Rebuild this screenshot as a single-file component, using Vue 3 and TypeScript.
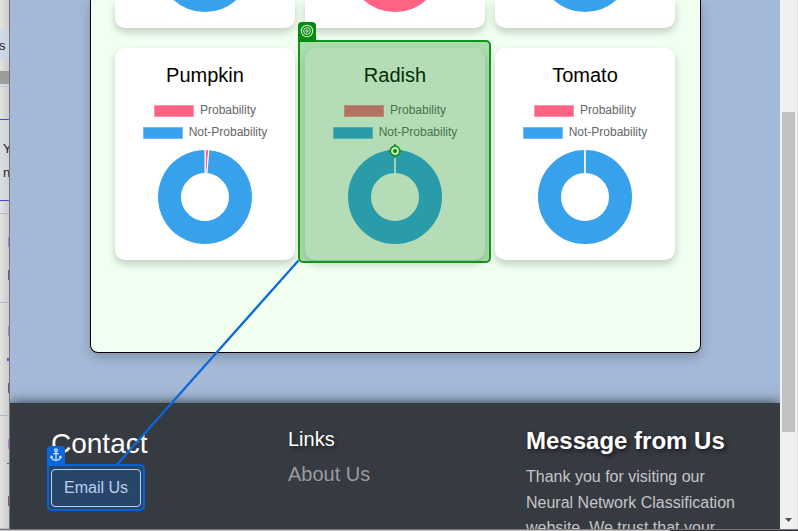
<script setup lang="ts">
interface Vegetable {
  name: string
  share: number
}

const previous = [
  { id: 'a', color: '#38a1eb' },
  { id: 'b', color: '#ff6384' },
  { id: 'c', color: '#38a1eb' },
]

const vegetables: Vegetable[] = [
  { name: 'Pumpkin', share: 0.013 },
  { name: 'Radish', share: 0 },
  { name: 'Tomato', share: 0 },
]

// Ring segment between two fractions of a full turn, clockwise from the top.
function segment(from: number, to: number): string {
  const point = (r: number, f: number) => {
    const a = f * Math.PI * 2
    return `${(48 + r * Math.sin(a)).toFixed(2)} ${(48 - r * Math.cos(a)).toFixed(2)}`
  }
  const large = to - from > 0.5 ? 1 : 0
  return `M${point(47.5, from)}A47.5 47.5 0 ${large} 1 ${point(47.5, to)}L${point(23.5, to)}A23.5 23.5 0 ${large} 0 ${point(23.5, from)}Z`
}
</script>

<template>
  <div class="screen">
    <aside class="behind">
      <div class="b-head"></div>
      <div class="b-tab">s</div>
      <div class="b-gap"></div>
      <div class="b-bar"></div>
      <div class="b-space"></div>
      <div class="b-box"><span>Y</span><span>n</span></div>
      <div class="b-rest"></div>
      <div class="b-row first"><i></i><i class="dark"></i></div>
      <div class="b-row second"><i></i><i class="blue"></i><i class="dark"></i></div>
      <div class="b-row third"><i></i><i class="line"></i><i class="dark"></i></div>
    </aside>

    <main class="page">
      <section class="panel">
        <div class="row">
          <article v-for="p in previous" :key="p.id" class="card cut">
            <svg class="donut" width="96" height="96" viewBox="0 0 96 96">
              <circle cx="48" cy="48" r="35.5" fill="none" :stroke="p.color" stroke-width="23" />
            </svg>
          </article>
        </div>
        <div class="row">
          <article v-for="v in vegetables" :key="v.name" class="card">
            <h5>{{ v.name }}</h5>
            <div class="legend">
              <div class="key"><span class="swatch pink"></span>Probability</div>
              <div class="key"><span class="swatch blue"></span>Not-Probability</div>
            </div>
            <svg class="donut" width="96" height="96" viewBox="0 0 96 96">
              <template v-if="v.share > 0">
                <path :d="segment(0, v.share)" fill="#ff6384" stroke="#fff" stroke-width="1.2" />
                <path :d="segment(v.share, 1)" fill="#38a1eb" stroke="#fff" stroke-width="1" />
              </template>
              <template v-else>
                <circle cx="48" cy="48" r="35.5" fill="none" stroke="#38a1eb" stroke-width="23" />
                <path d="M48 0V25" stroke="#fff" stroke-width="1.700" />
              </template>
            </svg>
          </article>
        </div>
      </section>

      <footer class="footer">
        <div class="col contact">
          <h3>Contact</h3>
          <button type="button">Email Us</button>
        </div>
        <div class="col links">
          <h5>Links</h5>
          <a>About Us</a>
        </div>
        <div class="col message">
          <h4>Message from Us</h4>
          <p>Thank you for visiting our Neural Network Classification website. We trust that your</p>
        </div>
      </footer>
    </main>

    <div class="scrollbar">
      <div class="thumb"></div>
      <svg class="down" width="7" height="4" viewBox="0 0 7 4"><path d="M0 0h7L3.5 4z" fill="#505050" /></svg>
    </div>

    <div class="bottom-edge"><span></span></div>

    <svg class="connector" width="798" height="531" viewBox="0 0 798 531">
      <path d="M298.500 260.500L117 464.500" stroke="#0969da" stroke-width="2.200" fill="none" />
    </svg>

    <div class="mark target">
      <span class="badge">
        <svg width="14" height="14" viewBox="0 0 14 14" fill="none" stroke="#d5f2d5">
          <circle cx="7" cy="7" r="5.700" stroke-width="1.100" />
          <circle cx="7" cy="7" r="3.400" stroke-width="1" />
          <circle cx="7" cy="7" r="1.200" stroke-width="1" />
        </svg>
      </span>
    </div>
    <svg class="point" width="14" height="14" viewBox="0 0 14 14">
      <path d="M7 0v14M0 7h14" stroke="#12941b" stroke-width="1.600" />
      <circle cx="7" cy="7" r="4.800" fill="#c5ebc8" stroke="#12941b" stroke-width="1.700" />
      <circle cx="7" cy="7" r="2" fill="#078a10" />
    </svg>

    <div class="mark anchor">
      <span class="badge">
        <svg width="12" height="14" viewBox="0 0 12 14" fill="none" stroke="#d8e9ff" stroke-width="1.200">
          <circle cx="6" cy="2.300" r="1.400" />
          <path d="M6 3.700V12.500M3.300 5.700H8.700M1.300 8.500C1.500 11 3.500 12.300 6 12.500C8.500 12.300 10.500 11 10.700 8.500M.5 10L1.300 8.200L3 9.500M11.500 10L10.700 8.200L9 9.500" />
        </svg>
      </span>
    </div>
  </div>
</template>

<style>
body {
  margin: 0;
  overflow: hidden;
}
</style>

<style scoped>
* {
  box-sizing: border-box;
}
.screen {
  position: relative;
  width: 798px;
  height: 531px;
  overflow: hidden;
  display: grid;
  grid-template: 529px 2px / 10px 770px 18px;
  font-family: "Liberation Sans", Arial, sans-serif;
  background: #dcdcdc;
}
h3, h4, h5, p {
  margin: 0;
  font-weight: 400;
}

/* window behind */
.behind {
  overflow: hidden;
  border-right: 1px solid #777;
  background: linear-gradient(90deg, #e3e3e3, #cbcbcb);
  display: flex;
  flex-direction: column;
  color: #222;
  font-size: 13px;
}
.behind > div { flex: none; }
.b-head { height: 29px; }
.b-tab {
  height: 32px;
  line-height: 33px;
  margin-left: -1px;
  background: rgba(200, 211, 235, .6);
}
.b-gap { height: 10px; }
.b-bar { height: 13px; background: #9c9c9c; }
.b-space { height: 35px; margin-top: 2px; border-top: 1px solid #b9c4df; }
.b-box {
  height: 82px;
  margin-top: -2px;
  border-top: 1px solid #4a43cc;
  border-bottom: 1px solid #4a43cc;
  background: rgba(210, 215, 225, .5);
  display: flex;
  flex-direction: column;
  padding: 17px 0 0 3px;
  line-height: 24px;
}
.b-rest { height: 13px; border-bottom: 1px solid #b0b9cb; }
.b-row {
  display: flex;
  flex-direction: column;
  align-items: flex-end;
  border-bottom: 1px solid #b0b9cb;
}
.b-row i { width: 1px; height: 10px; background: #b77bc9; }
.b-row .dark { background: #884b76; }
.b-row .blue { width: 2px; height: 3px; background: #6a55cf; }
.b-row .line { width: 2px; height: 1px; margin-bottom: 18px; background: #555; }
.first { height: 89px; padding-top: 23px; gap: 23px; }
.second { height: 113px; padding-top: 23px; gap: 22px; }
.third { height: 113px; padding-top: 23px; gap: 14px; }

/* page */
.page {
  overflow: hidden;
  background: #a3b9d7;
  display: flex;
  flex-direction: column;
}
.panel {
  width: 611px;
  height: 353px;
  flex: none;
  margin-left: 80px;
  padding: 0 24px;
  border: 1px solid #000;
  border-top: 0;
  border-radius: 0 0 8px 8px;
  background: #f0fff0;
  box-shadow: 0 4px 12px rgba(0, 0, 0, .22);
  display: flex;
  flex-direction: column;
  gap: 20px;
}
.row {
  display: flex;
  gap: 10px;
}
.card {
  width: 180px;
  height: 212px;
  border-radius: 10px;
  background: #fff;
  box-shadow: 0 4px 8px rgba(0, 0, 0, .2);
  display: flex;
  flex-direction: column;
  align-items: center;
  padding-top: 15px;
}
.card.cut {
  height: 28px;
  padding: 0 0 15px;
  border-radius: 0 0 10px 10px;
  justify-content: flex-end;
}
.card h5 {
  font-size: 20px;
  line-height: 24px;
  color: #000;
}
.legend {
  margin-top: 13px;
  font-size: 12px;
  line-height: 20px;
  color: #666;
}
.key {
  height: 22px;
  display: flex;
  justify-content: center;
  align-items: flex-start;
  gap: 6px;
}
.swatch {
  width: 40px;
  height: 12px;
  margin-top: 5px;
  border: 1px solid #ff91a9;
  background: #ff6384;
}
.swatch.blue {
  border-color: #72bdf1;
  background: #38a1eb;
}
.donut {
  display: block;
  flex: none;
  margin-top: 5px;
}
.cut .donut { margin: 0; }

.footer {
  height: 126px;
  flex: none;
  margin-top: 50px;
  background: #363a41;
  box-shadow: 0 0 12px rgba(0, 0, 0, .75);
  display: grid;
  grid-template-columns: 237px 238px 1fr;
  padding: 0 30px 0 41px;
  color: #fff;
}
.contact h3 {
  font-size: 28px;
  line-height: 34px;
  padding-top: 24px;
}
.contact button {
  display: block;
  width: 90px;
  height: 38px;
  margin-top: 8px;
  padding: 0;
  border: 1px solid #f8f9fa;
  border-radius: 4px;
  background: none;
  color: #f8f9fa;
  font: 16px/24px "Liberation Sans", Arial, sans-serif;
}
.links h5 {
  padding-top: 24px;
  font-size: 20px;
  line-height: 24px;
  text-shadow: 2px 2px 4px rgba(0, 0, 0, .5);
}
.links a {
  display: block;
  margin-top: 8px;
  font-size: 20px;
  line-height: 30px;
  color: #999ca0;
}
.message h4 {
  padding-top: 23px;
  font-size: 24px;
  font-weight: 700;
  line-height: 29px;
  text-shadow: 2px 2px 4px rgba(0, 0, 0, .6);
}
.message p {
  width: 225px;
  margin-top: 9px;
  font-size: 16px;
  line-height: 25.600px;
  color: #c5c6c8;
}

.scrollbar {
  background: #f0f0f0;
  border-right: 1px solid #e0e0e0;
  padding: 112px 2px 0;
  display: flex;
  flex-direction: column;
  align-items: center;
}
.thumb {
  width: 13px;
  height: 320px;
  background: #c1c1c1;
}
.down { margin-top: 86px; }
.bottom-edge {
  grid-column: 1 / -1;
  border-top: 1px solid #777;
  background: #c5c5c8;
  display: flex;
  justify-content: flex-end;
}
.bottom-edge span {
  width: 128px;
  height: 1px;
  background: #352d33;
}

/* annotations over the page */
.connector {
  position: absolute;
  left: 0;
  top: 0;
}
.mark {
  position: absolute;
  border: 2px solid;
  border-radius: 5px;
}
.badge {
  position: absolute;
  left: -2px;
  bottom: 100%;
  width: 18px;
  height: 20px;
  padding-bottom: 2px;
  border-radius: 4px 4px 0 0;
  display: flex;
  align-items: center;
  justify-content: center;
}
.target {
  left: 298px;
  top: 40px;
  width: 193px;
  height: 223px;
  border-color: #12941b;
  border-top-left-radius: 0;
  background: rgba(8, 143, 16, .3);
}
.target .badge { background: #078a10; }
.anchor {
  left: 47px;
  top: 464px;
  width: 98px;
  height: 47px;
  border-color: #0563d2;
  border-top-left-radius: 0;
  background: rgba(3, 102, 214, .28);
}
.anchor .badge { background: #0969da; }
.point {
  position: absolute;
  left: 388px;
  top: 144px;
}
</style>
